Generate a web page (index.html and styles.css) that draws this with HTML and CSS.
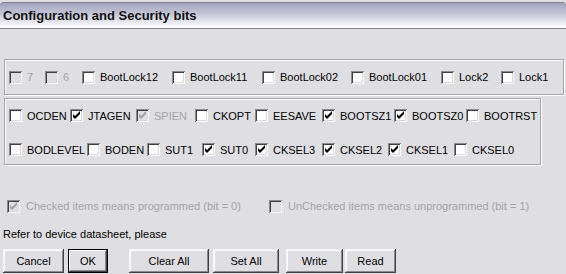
FILE: index.html
```html
<!DOCTYPE html>
<html>
<head>
<meta charset="utf-8">
<title>Configuration and Security bits</title>
<link rel="stylesheet" href="styles.css">
</head>
<body>
<div class="titlebar"><span class="title">Configuration and Security bits</span></div>

<div class="group group-lock">
  <div class="cbrow cols-lock">
    <label class="cb disabled"><span class="box"></span><span class="lbl">7</span></label>
    <label class="cb disabled"><span class="box"></span><span class="lbl">6</span></label>
    <label class="cb"><span class="box"></span><span class="lbl">BootLock12</span></label>
    <label class="cb"><span class="box"></span><span class="lbl">BootLock11</span></label>
    <label class="cb"><span class="box"></span><span class="lbl">BootLock02</span></label>
    <label class="cb"><span class="box"></span><span class="lbl">BootLock01</span></label>
    <label class="cb"><span class="box"></span><span class="lbl">Lock2</span></label>
    <label class="cb"><span class="box"></span><span class="lbl">Lock1</span></label>
  </div>
</div>

<div class="group group-fuse">
  <div class="cbrow cols-fuse-a">
    <label class="cb"><span class="box"></span><span class="lbl">OCDEN</span></label>
    <label class="cb"><span class="box"><svg viewBox="0 0 13 13" width="13" height="13"><polygon points="3,5 5,7 10,2 10,5 5,10 3,8"/></svg></span><span class="lbl">JTAGEN</span></label>
    <label class="cb disabled"><span class="box"><svg viewBox="0 0 13 13" width="13" height="13"><polygon points="3,5 5,7 10,2 10,5 5,10 3,8"/></svg></span><span class="lbl">SPIEN</span></label>
    <label class="cb"><span class="box"></span><span class="lbl">CKOPT</span></label>
    <label class="cb"><span class="box"></span><span class="lbl">EESAVE</span></label>
    <label class="cb"><span class="box"><svg viewBox="0 0 13 13" width="13" height="13"><polygon points="3,5 5,7 10,2 10,5 5,10 3,8"/></svg></span><span class="lbl">BOOTSZ1</span></label>
    <label class="cb"><span class="box"><svg viewBox="0 0 13 13" width="13" height="13"><polygon points="3,5 5,7 10,2 10,5 5,10 3,8"/></svg></span><span class="lbl">BOOTSZ0</span></label>
    <label class="cb"><span class="box"></span><span class="lbl">BOOTRST</span></label>
  </div>
  <div class="cbrow cols-fuse-b">
    <label class="cb"><span class="box"></span><span class="lbl">BODLEVEL</span></label>
    <label class="cb"><span class="box"></span><span class="lbl">BODEN</span></label>
    <label class="cb"><span class="box"></span><span class="lbl">SUT1</span></label>
    <label class="cb"><span class="box"><svg viewBox="0 0 13 13" width="13" height="13"><polygon points="3,5 5,7 10,2 10,5 5,10 3,8"/></svg></span><span class="lbl">SUT0</span></label>
    <label class="cb"><span class="box"><svg viewBox="0 0 13 13" width="13" height="13"><polygon points="3,5 5,7 10,2 10,5 5,10 3,8"/></svg></span><span class="lbl">CKSEL3</span></label>
    <label class="cb"><span class="box"><svg viewBox="0 0 13 13" width="13" height="13"><polygon points="3,5 5,7 10,2 10,5 5,10 3,8"/></svg></span><span class="lbl">CKSEL2</span></label>
    <label class="cb"><span class="box"><svg viewBox="0 0 13 13" width="13" height="13"><polygon points="3,5 5,7 10,2 10,5 5,10 3,8"/></svg></span><span class="lbl">CKSEL1</span></label>
    <label class="cb"><span class="box"></span><span class="lbl">CKSEL0</span></label>
  </div>
</div>

<div class="legend">
  <label class="cb disabled"><span class="box"><svg viewBox="0 0 13 13" width="13" height="13"><polygon points="3,5 5,7 10,2 10,5 5,10 3,8"/></svg></span><span class="lbl wide">Checked items means programmed (bit = 0)</span></label>
  <label class="cb disabled"><span class="box"></span><span class="lbl wide">UnChecked items means unprogrammed (bit = 1)</span></label>
</div>

<div class="note">Refer to device datasheet, please</div>

<div class="buttons">
  <button class="btn btn-cancel">Cancel</button>
  <button class="btn btn-ok">OK</button>
  <button class="btn btn-clear">Clear All</button>
  <button class="btn btn-set">Set All</button>
  <button class="btn btn-write">Write</button>
  <button class="btn btn-read">Read</button>
</div>
</body>
</html>
```

FILE: styles.css
```css
* { box-sizing: border-box; }

html, body { margin: 0; padding: 0; }

body {
  width: 566px;
  height: 274px;
  overflow: hidden;
  background: #dfdfe3;
  font-family: "Liberation Sans", Arial, sans-serif;
  font-size: 11px;
  color: #000;
}

.titlebar {
  margin-top: 2px;
  height: 27px;
  padding: 1px 0 0 3px;
  border-top: 1px solid #7d7d93;
  border-bottom: 1px solid #85858c;
  border-radius: 4px 4px 0 0;
  background: linear-gradient(#a3a3be, #c2c2d5 40%, #ebebf2 80%, #ffffff);
}

.title {
  font-weight: bold;
  font-size: 13px;
  line-height: 24px;
  color: #101010;
}

.group {
  margin-left: 4px;
  padding-left: 4px;
  border: 1px solid #a3a3a8;
  box-shadow: inset 1px 1px 0 #fff, 1px 1px 0 #fff;
  display: flex;
  flex-direction: column;
}

.group-lock {
  margin-top: 30px;
  width: 560px;
  height: 36px;
  justify-content: center;
}

.group-fuse {
  margin-top: 3px;
  width: 537px;
  height: 67px;
  padding-top: 5px;
  gap: 11px;
}

.cbrow {
  display: grid;
  align-items: center;
  height: 23px;
}

.cols-lock { grid-template-columns: 36px 37px 90px 90px 89px 90px 60px auto; }
.cols-fuse-a { grid-template-columns: 61px 66px 59px 60px 67px 72px 72px auto; }
.cols-fuse-b { grid-template-columns: 78px 60px 55px 53px 67px 66px 66px auto; }

.cb {
  display: flex;
  align-items: center;
  white-space: nowrap;
}

.box {
  width: 13px;
  height: 13px;
  flex: none;
  background: #fff;
  box-shadow:
    inset 1px 1px 0 #8a8a8e,
    inset -1px -1px 0 #ffffff,
    inset 2px 2px 0 #404040,
    inset -2px -2px 0 #d8d8dc;
}

.box svg { display: block; }
.box polygon { fill: #000; }

.lbl { margin-left: 5px; }
.lbl.wide { margin-left: 6px; }

.disabled .box { background: #dfdfe3; }
.disabled .box polygon { fill: #a0a0a4; }
.disabled .lbl { color: #a3a3a7; }

.legend {
  display: grid;
  grid-template-columns: 262px auto;
  align-items: center;
  height: 16px;
  margin-top: 33px;
  padding-left: 7px;
}

.note {
  margin-top: 13px;
  padding-left: 3px;
  line-height: 14px;
}

.buttons {
  display: flex;
  margin-top: 8px;
  padding-left: 3px;
  height: 24px;
}

.btn {
  height: 24px;
  padding: 0;
  border: none;
  background: #dfdfe3;
  font: inherit;
  color: #000;
  box-shadow:
    inset -1px -1px 0 #404040,
    inset 1px 1px 0 #f4f4f6,
    inset -2px -2px 0 #8a8a8e,
    inset 2px 2px 0 #ffffff;
}

.btn-ok {
  box-shadow:
    inset 0 0 0 1px #000,
    inset -2px -2px 0 #404040,
    inset 2px 2px 0 #ffffff,
    inset -3px -3px 0 #8a8a8e;
}

.btn-cancel { width: 61px; }
.btn-ok { width: 40px; margin-left: 4px; }
.btn-clear { width: 80px; margin-left: 21px; }
.btn-set { width: 66px; margin-left: 4px; }
.btn-write { width: 57px; margin-left: 7px; }
.btn-read { width: 51px; margin-left: 2px; }
```
